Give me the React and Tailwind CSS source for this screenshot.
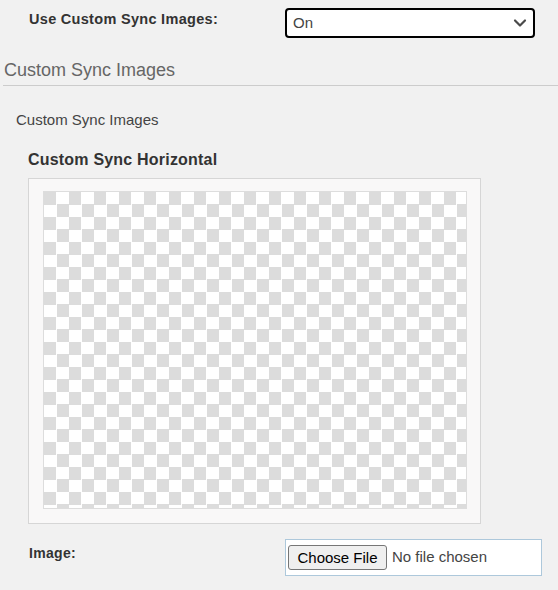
import React from 'react';

const Chevron = () => (
  <svg width="14" height="10" viewBox="0 0 14 10" className="mr-[6px]">
    <path d="M2 2.5 L7 7.5 L12 2.5" fill="none" stroke="#4a4a4a" strokeWidth="2.2" strokeLinecap="round" strokeLinejoin="round" />
  </svg>
);

const App = () => {
  return (
    <div className="min-h-screen w-full bg-[#f1f1f1] text-[#333] font-['Liberation_Sans',Arial,sans-serif] overflow-hidden">
      {/* toggle row */}
      <div className="flex items-start pt-[8px]">
        <div className="w-[285px] pl-[29px] pt-[3px] text-[14.5px] leading-[16px] font-bold text-[#333] tracking-[0.3px]">
          Use Custom Sync Images:
        </div>
        <div className="w-[250px] h-[30px] border-2 border-black rounded-[4px] bg-white flex items-center justify-between">
          <span className="pl-[6px] pt-[1px] text-[15px] text-[#444]">On</span>
          <Chevron />
        </div>
      </div>

      {/* section header */}
      <div className="mt-[21px] ml-[3px] pl-[1px] pb-[4px] border-b border-[#cccccc]">
        <h2 className="text-[18px] leading-[22px] text-[#666]">Custom Sync Images</h2>
      </div>

      <div className="mt-[25px] pl-[16px] text-[15px] leading-[18px] text-[#444]">Custom Sync Images</div>

      <div className="mt-[21px] pl-[28px] text-[16px] leading-[19px] font-bold text-[#333] tracking-[0.2px]">
        Custom Sync Horizontal
      </div>

      {/* image preview */}
      <div className="mt-[9px] ml-[28px] w-[453px] border border-[#d6d6d6] bg-[#f9f8f8] px-[14px] pt-[12px] pb-[14px]">
        <div className="w-[424px] h-[318px] border border-[#dddddd] bg-[conic-gradient(#fff_25%,#dcdcdc_0_50%,#fff_0_75%,#dcdcdc_0)] bg-[length:25px_25px]" />
      </div>

      {/* file row */}
      <div className="flex items-start mt-[15px]">
        <div className="w-[285px] pl-[29px] pt-[6px] text-[14px] leading-[16px] font-bold text-[#333] tracking-[0.3px]">
          Image:
        </div>
        <div className="w-[257px] h-[37px] border border-[#adc8db] bg-white flex items-center pl-[2px]">
          <button className="h-[25px] w-[99px] bg-[#efefef] border border-[#767676] rounded-[3px] text-[15px] text-black leading-none">
            Choose File
          </button>
          <span className="ml-[5px] text-[15px] text-[#444]">No file chosen</span>
        </div>
      </div>
    </div>
  );
};

export default App;
